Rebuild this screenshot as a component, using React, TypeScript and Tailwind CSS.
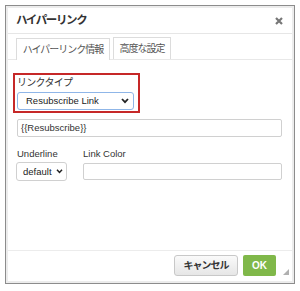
import React from "react";

const jp = { fontFamily: '"Liberation Sans", "Noto Sans CJK JP", sans-serif' };

export default function App() {
  return (
    <div className="w-[300px] h-[291px] bg-white pt-[5px] pl-[5px]" style={jp}>
      <div className="w-[290px] h-[279px] border border-[#8c8c8c] bg-white">
        <div className="w-full h-full border-2 border-[#ececec] flex flex-col">
          {/* header */}
          <div className="h-[26px] border-b border-[#e6e6e6] flex items-center justify-between pl-[8px] pr-[9px] shrink-0">
            <span className="text-[11.5px] font-bold text-[#333] leading-none tracking-[-1.4px] whitespace-nowrap">ハイパーリンク</span>
            <svg width="8" height="8" viewBox="0 0 8 8"><path d="M1 1 L7 7 M7 1 L1 7" stroke="#777" strokeWidth="2.2" /></svg>
          </div>
          {/* tabs */}
          <div className="h-[26px] pt-[4px] pl-[8px] flex items-end gap-[3px] border-b border-[#e8e8e8] shrink-0">
            <div className="w-[94px] h-[22px] border border-b-0 border-[#dcdcdc] bg-white flex items-center justify-center text-[10px] text-[#555] -mb-px whitespace-nowrap tracking-[-1px]">
              ハイパーリンク情報
            </div>
            <div className="w-[58px] h-[22px] border border-b-0 border-[#dcdcdc] bg-white flex items-center justify-center text-[10px] text-[#555] whitespace-nowrap tracking-[-1px]">
              高度な設定
            </div>
          </div>
          {/* content */}
          <div className="flex-1 pl-[5px] pt-[13px] flex flex-col">
            <div className="w-[127px] h-[40px] border-2 border-[#c62828] flex flex-col pl-[2px]">
              <div className="text-[10px] text-[#333] leading-none mt-[3px] h-[12px] tracking-[-0.7px] whitespace-nowrap">リンクタイプ</div>
              <div className="mt-[2px] w-[117px] h-[18px] border border-[#8fb6e8] rounded-[3px] bg-white flex items-center justify-between pl-[8px] pr-[4px]">
                <span className="text-[9.5px] text-[#222] leading-none">Resubscribe Link</span>
                <svg width="8" height="6" viewBox="0 0 8 6"><path d="M1 1 L4 4.2 L7 1" stroke="#222" strokeWidth="1.8" fill="none" /></svg>
              </div>
            </div>
            <div className="mt-[6px] ml-[4px] w-[265px] h-[18px] border border-[#d0d0d0] rounded-[2px] flex items-center pl-[3px]">
              <span className="text-[9.5px] text-[#333] leading-none">{"{{Resubscribe}}"}</span>
            </div>
            <div className="mt-[12px] ml-[4px] flex gap-[16px]">
              <div className="flex flex-col">
                <div className="text-[9.5px] text-[#333] leading-none h-[10px]">Underline</div>
                <div className="mt-[3px] -ml-[1px] w-[51px] h-[19px] border border-[#d0d0d0] rounded-[3px] flex items-center justify-between pl-[6px] pr-[3px]">
                  <span className="text-[9.5px] text-[#222] leading-none whitespace-nowrap">default</span>
                  <svg className="shrink-0" width="7" height="5" viewBox="0 0 8 6"><path d="M1 1 L4 4.2 L7 1" stroke="#222" strokeWidth="1.8" fill="none" /></svg>
                </div>
              </div>
              <div className="flex flex-col">
                <div className="text-[9.5px] text-[#333] leading-none h-[10px]">Link Color</div>
                <div className="mt-[4px] w-[199px] h-[17px] border border-[#d0d0d0] rounded-[2px]" />
              </div>
            </div>
          </div>
          {/* footer */}
          <div className="h-[31px] border-t border-[#ececec] flex items-start justify-end pt-[4px] pr-[16px] gap-[5px] relative shrink-0">
            <div className="w-[64px] h-[21px] border border-[#c8c8c8] rounded-[3px] bg-gradient-to-b from-[#fafafa] to-[#e6e6e6] flex items-center justify-center text-[10px] font-bold text-[#333] tracking-[-1px] whitespace-nowrap">
              キャンセル
            </div>
            <div className="w-[33px] h-[21px] rounded-[2px] bg-[#80b84a] flex items-center justify-center text-[10px] font-bold text-white">
              OK
            </div>
            <svg className="absolute right-[3px] bottom-[6px]" width="6" height="6" viewBox="0 0 7 7"><path d="M7 0 L7 7 L0 7 Z" fill="#b0b0b0" /></svg>
          </div>
        </div>
      </div>
    </div>
  );
}
